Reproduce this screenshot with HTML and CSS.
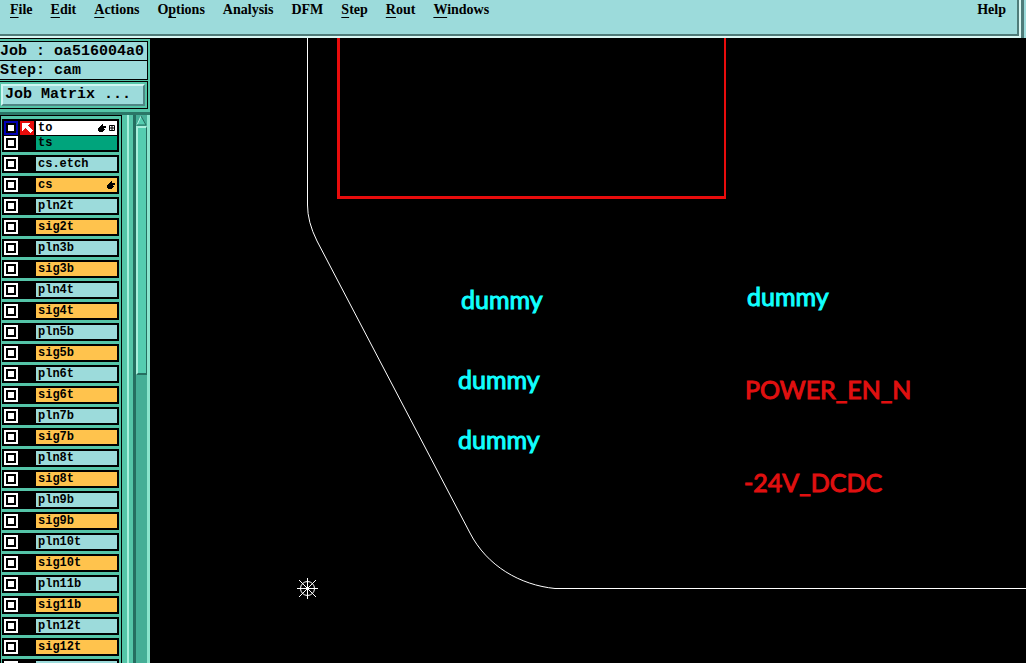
FILE: index.html
```
<!DOCTYPE html>
<html lang="en">
<head>
    <meta charset="UTF-8">
    <meta name="viewport" content="width=device-width, initial-scale=1.0">
    <title>Graphic Editor</title>
    <link rel="stylesheet" href="styles.css">
</head>
<body>

<!-- Menu bar -->
<header class="top">
    <nav class="menubar">
        <button type="button"><u>F</u>ile</button>
        <button type="button"><u>E</u>dit</button>
        <button type="button"><u>A</u>ctions</button>
        <button type="button">O<u>p</u>tions</button>
        <button type="button">Analysis</button>
        <button type="button">DFM</button>
        <button type="button"><u>S</u>tep</button>
        <button type="button"><u>R</u>out</button>
        <button type="button"><u>W</u>indows</button>
        <button type="button" class="help">Help</button>
    </nav>
    <div class="top-edge"></div>
</header>

<main class="workspace">
    <aside class="sidebar">
        <div class="info">
            <div class="info-line">Job : oa516004a0</div>
            <div class="info-line">Step: cam</div>
        </div>
        <div class="matrix-frame">
            <button type="button" class="matrix">Job Matrix ...</button>
        </div>

        <div class="layers">
            <div class="layer-list" id="layer-list">
                <div class="group">
                    <div class="layer">
                        <input type="checkbox" class="tick current" id="layer-to">
                        <span class="mark">
                            <svg class="arrow" width="14" height="14" viewBox="0 0 14 14">
                                <path d="M2 2h8v1H9v1H8v1h1v1h1v1h1v1h1v1h1v1h-1v1h-1v1h-1v-1H9v-1H8V9H7V8H6V7H5v1H4v1H3v1H2z" fill="#fff"/>
                            </svg>
                        </span>
                        <label class="name white" for="layer-to">to
                            <svg class="flags" width="17" height="8" viewBox="0 0 17 8">
                                <path d="M4 0h1v1H5v1h3v2H6v1h1v1H6v1H5v1H1V7H0V4h1V3h1V2h1V1h1z"/>
                                <path d="M11.500 1.500h5v5h-5zM14 1.500v5M11.500 4h5" fill="none" stroke="#000"/>
                            </svg>
                        </label>
                    </div>
                    <div class="layer">
                        <input type="checkbox" class="tick" id="layer-ts">
                        <span class="mark"></span>
                        <label class="name green" for="layer-ts">ts</label>
                    </div>
                </div>
            </div>
            <div class="list-edge"></div>
            <div class="scrollbar">
                <svg width="11" height="11" viewBox="0 0 11 11">
                    <path d="M5 1L10 10H1z" fill="#55cdb0"/>
                    <path d="M5 1L1 10" stroke="#b4f4e4" fill="none"/>
                    <path d="M5 1L10 10H1" stroke="#256e60" fill="none"/>
                </svg>
                <div class="thumb"></div>
            </div>
        </div>
    </aside>

    <!-- Board drawing -->
    <section class="board">
        <svg class="drawing">
            <path class="outline" d="M157.500 0V167Q157.500 184 167 203L320 495C337 528 370 547 405 550.500H4000"/>
            <path class="keepout" d="M188.500 0V159.500H576"/>
            <path class="keepout thin" d="M575 0V161"/>
            <text class="net cyan" x="311" y="271">dummy</text>
            <text class="net cyan" x="308" y="351">dummy</text>
            <text class="net cyan" x="308" y="411">dummy</text>
            <text class="net cyan" x="597" y="268">dummy</text>
            <text class="net red" x="595" y="361">POWER_EN_N</text>
            <text class="net red" x="594" y="454">-24V_DCDC</text>
            <g class="origin">
                <circle cx="157.500" cy="550.500" r="7"/>
                <path d="M147 550.500h21M157.500 540v21M149 542l17 17M166 542l-17 17"/>
            </g>
        </svg>
    </section>
</main>

<script>
    var layers = ["cs.etch", "cs", "pln2t", "sig2t", "pln3b", "sig3b", "pln4t", "sig4t", "pln5b", "sig5b",
        "pln6t", "sig6t", "pln7b", "sig7b", "pln8t", "sig8t", "pln9b", "sig9b", "pln10t", "sig10t",
        "pln11b", "sig11b", "pln12t", "sig12t", ""];
    var hand = '<svg class="flags" width="8" height="8" viewBox="0 0 8 8">' +
        '<path d="M4 0h1v1H5v1h3v2H6v1h1v1H6v1H5v1H1V7H0V4h1V3h1V2h1V1h1z"/></svg>';
    var list = document.getElementById("layer-list");

    // One framed row for each board layer
    layers.forEach(function (name, i) {
        var color = i % 2 ? "amber" : "blue";
        var row = document.createElement("div");
        row.className = "group";
        row.innerHTML = `
            <div class="layer">
                <input type="checkbox" class="tick" id="layer-${i}">
                <span class="mark"></span>
                <label class="name ${color}" for="layer-${i}">${name}${name === "cs" ? hand : ""}</label>
            </div>
        `;
        list.appendChild(row);
    });
</script>

</body>
</html>
```
FILE: styles.css
```
* {
    box-sizing: border-box;
}
body {
    margin: 0;
    height: 100vh;
    display: flex;
    flex-direction: column;
    overflow: hidden;
    background: #000;
    color: #000;
}
button {
    margin: 0;
    padding: 0;
    border: none;
    background: none;
    color: inherit;
    font: inherit;
    cursor: pointer;
}

/* Menu bar */
.top {
    display: flex;
    flex: none;
    height: 38px;
    background: #9cdbdb;
}
.menubar {
    flex: 1;
    display: flex;
    align-items: flex-start;
    gap: 18px;
    padding: 1px 11px 0 10px;
    border-right: 2px solid #4f7b79;
    border-bottom: 2px solid #4f7b79;
    box-shadow: 0 2px 0 #d9f8f4;
    margin-bottom: 2px;
    font: bold 14px/17px "Liberation Serif", serif;
}
.menubar u {
    text-underline-offset: 3px;
    text-decoration-thickness: 1px;
    text-decoration-skip-ink: none;
}
.help {
    margin-left: auto;
}
.top-edge {
    width: 7px;
    border-left: 2px solid #d9f8f4;
    background: linear-gradient(90deg, #4f7b79 3px, #9cdbdb 3px);
}

.workspace {
    flex: 1;
    min-height: 0;
    display: flex;
}

/* Job panel */
.sidebar {
    flex: none;
    width: 150px;
    display: flex;
    flex-direction: column;
    background: #55c5a8;
    border-top: 1px solid #000;
    font: bold 15px/20px "Liberation Mono", monospace;
    white-space: nowrap;
}
.info {
    margin: 2px 2px 0 0;
    border-bottom: 1px solid #000;
}
.info-line {
    height: 19px;
    border: 1px solid #000;
    border-width: 1px 1px 0 0;
    background: #9cdbdb;
}
.matrix-frame {
    margin: 1px 2px 0 0;
    padding: 2px;
    padding-left: 1px;
    border: 1px solid #000;
    border-left: none;
}
.matrix {
    display: block;
    width: 100%;
    height: 22px;
    padding: 0 2px;
    border: 2px solid;
    border-color: #d0f6f2 #4f8584 #4f8584 #d0f6f2;
    background: #9cdbdb;
    text-align: left;
    line-height: 18px;
}

/* Layer list */
.layers {
    flex: 1;
    min-height: 0;
    display: flex;
    margin-top: 3px;
    border-top: 3px solid #2b7767;
}
.layer-list {
    width: 122px;
    padding: 3px 2px 0 1px;
    border: 1px solid #000;
    border-bottom: none;
    overflow: hidden;
    font-size: 12px;
    line-height: 14px;
}
.group {
    margin-bottom: 3px;
    padding: 2px;
    background: #000;
}
.layer {
    display: flex;
}
.layer + .layer {
    margin-top: 1px;
}
.tick {
    flex: none;
    appearance: none;
    width: 14px;
    height: 14px;
    margin: 0;
    border: 2px solid #fff;
    background: #fff;
    box-shadow: inset 0 0 0 2px #000;
}
.current {
    border-color: #0000b4;
}
.mark {
    width: 18px;
    padding-left: 2px;
}
.arrow {
    display: block;
    background: #e80c0c;
}
.name {
    flex: 1;
    display: flex;
    justify-content: space-between;
    align-items: center;
    height: 14px;
    padding: 0 2px;
}
.flags {
    flex: none;
}
.white {
    background: #fff;
}
.green {
    background: #00a47c;
}
.blue {
    background: #9cdbdb;
}
.amber {
    background: #ffc34d;
}
.list-edge {
    width: 11px;
    background: linear-gradient(90deg, #55c5a8 5px, #a8f0dc 5px, #a8f0dc 7px, #55c5a8 7px);
}
.scrollbar {
    flex: 1;
    border-left: 3px solid #256e60;
    border-right: 3px solid #8ae4cc;
    background: #45ae96;
}
.scrollbar svg {
    display: block;
}
.thumb {
    height: 249px;
    border: 2px solid;
    border-color: #a8f0dc #256e60 #256e60 #a8f0dc;
    border-right-width: 1px;
    background: #55cdb0;
}

/* Board drawing */
.board {
    flex: 1;
    min-width: 0;
}
.drawing {
    display: block;
    width: 100%;
    height: 100%;
}
.outline {
    fill: none;
    stroke: #fff;
}
.keepout {
    fill: none;
    stroke: #e80c0c;
    stroke-width: 3px;
}
.thin {
    stroke-width: 2px;
}
.net {
    font-family: Lato, sans-serif;
    font-size: 25px;
    stroke-width: 1px;
}
.cyan {
    fill: #1ff;
    stroke: #1ff;
}
.red {
    fill: #e01010;
    stroke: #e01010;
}
.origin {
    fill: none;
    stroke: #fff;
}
```
